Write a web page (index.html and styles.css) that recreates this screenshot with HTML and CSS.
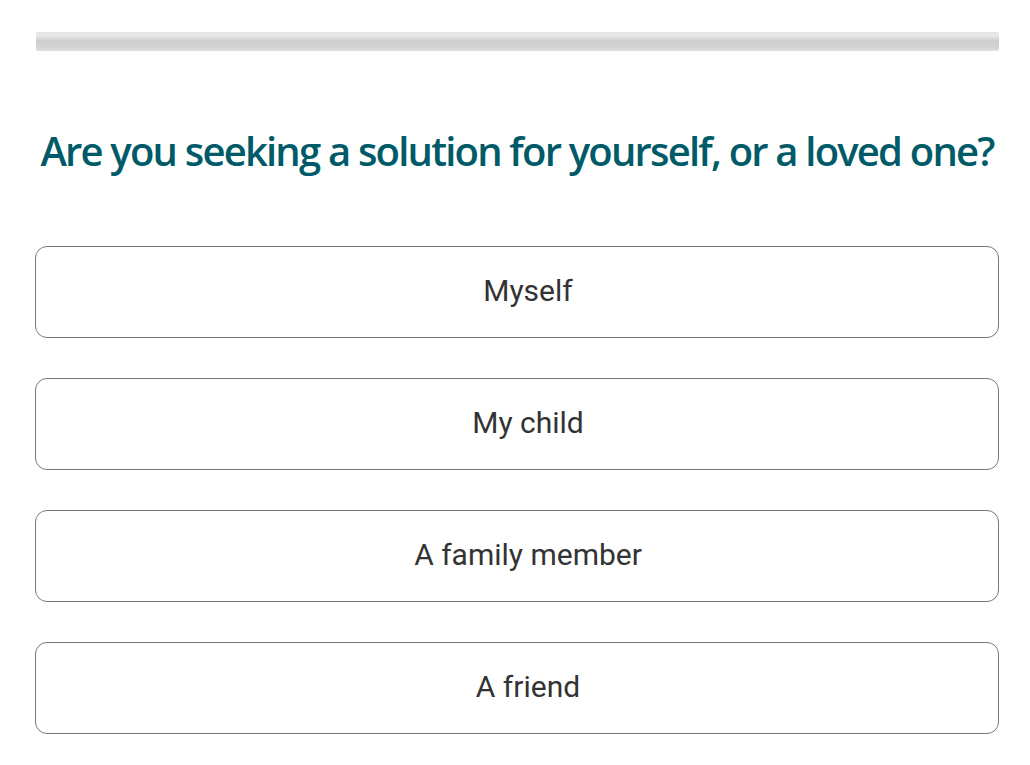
FILE: index.html
```html
<!DOCTYPE html>
<html lang="en">
<head>
  <meta charset="UTF-8">
  <title>Who is it for?</title>
  <link rel="stylesheet" href="styles.css">
</head>
<body>

  <div class="quiz">
    <div class="progress"></div>

    <h1 class="question">Are you seeking a solution for yourself, or a loved one?</h1>

    <div class="answers">
      <button class="answer">Myself</button>
      <button class="answer">My child</button>
      <button class="answer">A family member</button>
      <button class="answer">A friend</button>
    </div>
  </div>

</body>
</html>
```

FILE: styles.css
```css
body {
  margin: 0;
  background-color: #ffffff;
  font-family: 'Roboto', sans-serif;
}

.quiz {
  padding: 32px 31px 0 35px;
}

.progress {
  height: 19px;
  margin: 0 0 0 1px;
  border-radius: 2px;
  background: linear-gradient(to bottom, #e4e4e4 0%, #e8e8e8 20%, #cfcfcf 45%, #d2d2d2 75%, #dedede 100%);
}

.question {
  margin: 72px 0 0;
  font-family: 'Open Sans', sans-serif;
  font-size: 40px;
  font-weight: 600;
  letter-spacing: -1.8px;
  line-height: 56px;
  color: #005a68;
  text-align: center;
  white-space: nowrap;
}

.answers {
  display: flex;
  flex-direction: column;
  gap: 40px;
  margin-top: 67px;
}

.answer {
  height: 92px;
  padding: 0 0 3px 22px;
  background: #ffffff;
  border: 1px solid #777777;
  border-radius: 12px;
  font-family: 'Roboto', sans-serif;
  font-size: 30px;
  color: #333333;
  cursor: pointer;
}
```
